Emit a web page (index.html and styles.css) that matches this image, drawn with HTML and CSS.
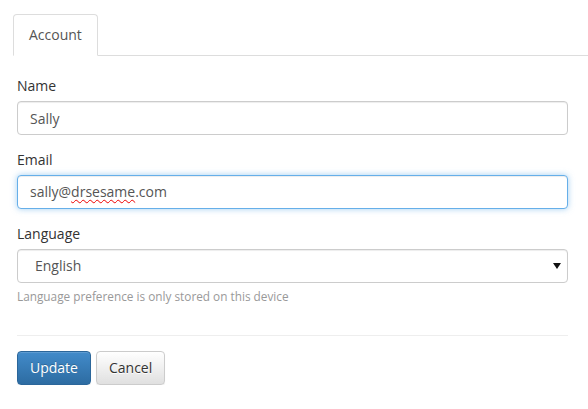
FILE: index.html
```html
<!DOCTYPE html>
<html lang="en">
<head>
<meta charset="utf-8">
<title>Account</title>
<link rel="stylesheet" href="styles.css">
</head>
<body>
<div class="page">
  <ul class="tabs">
    <li class="tab active">Account</li>
    <li class="tab-fill"></li>
  </ul>
  <form class="form">
    <div class="group">
      <label class="label">Name</label>
      <input class="control" type="text" value="Sally">
    </div>
    <div class="group">
      <label class="label">Email</label>
      <div class="control focus">sally@<span class="misspelled">drsesame</span>.com</div>
    </div>
    <div class="group">
      <label class="label">Language</label>
      <div class="select-wrap">
        <div class="control select">English</div>
        <svg class="caret" width="8" height="6" viewBox="0 0 8 6"><path d="M0 0H8L4 6Z" fill="#111"/></svg>
      </div>
      <p class="help">Language preference is only stored on this device</p>
    </div>
    <hr class="rule">
    <div class="actions">
      <button type="button" class="btn btn-primary">Update</button>
      <button type="button" class="btn btn-default">Cancel</button>
    </div>
  </form>
</div>
</body>
</html>
```

FILE: styles.css
```css
* { box-sizing: border-box; }
html, body { margin: 0; padding: 0; background: #fff; }
body {
  font-family: "Open Sans", "Liberation Sans", sans-serif;
  font-size: 14px;
  line-height: 20px;
  color: #333;
}
.page { width: 588px; }
.tabs {
  list-style: none;
  margin: 0;
  padding: 14px 0 0 13px;
  display: flex;
}
.tab {
  height: 42px;
  padding: 10px 15px;
  border: 1px solid #ddd;
  border-bottom-color: #fff;
  border-radius: 4px 4px 0 0;
  color: #555;
  background: #fff;
}
.tab-fill {
  flex: 1;
  border-bottom: 1px solid #ddd;
}
.form {
  padding: 20px 20px 0 17px;
  margin: 0;
}
.group { margin-bottom: 15px; }
.label {
  display: block;
  margin-bottom: 5px;
  color: #333;
}
.control {
  display: block;
  width: 100%;
  height: 34px;
  padding: 6px 12px;
  font-family: inherit;
  font-size: 14px;
  line-height: 20px;
  color: #555;
  background: #fff;
  border: 1px solid #ccc;
  border-radius: 4px;
  box-shadow: inset 0 1px 1px rgba(0,0,0,.075);
  outline: none;
}
.focus {
  border-color: #66afe9;
  box-shadow: inset 0 1px 1px rgba(0,0,0,.075), 0 0 6px rgba(102,175,233,.6);
}
.misspelled {
  text-decoration: underline wavy #e00;
  text-decoration-thickness: 1px;
  text-underline-offset: 2px;
}
.select-wrap { position: relative; }
.select { padding-left: 17px; }
.caret {
  position: absolute;
  right: 7px;
  top: 14px;
}
.help {
  margin: 5px 0 0;
  font-size: 11.8px;
  line-height: 16px;
  color: #999;
}
.rule {
  margin: 31px 0 15px;
  border: 0;
  border-top: 1px solid #eee;
}
.actions { display: flex; gap: 5px; }
.btn {
  height: 34px;
  padding: 6px 12px;
  font-family: inherit;
  font-size: 14px;
  line-height: 20px;
  border-radius: 4px;
  border: 1px solid;
  cursor: pointer;
}
.btn-primary {
  color: #fff;
  background: linear-gradient(#428bca, #2d6ca2);
  border-color: #2b669a;
  text-shadow: 0 -1px 0 rgba(0,0,0,.2);
  box-shadow: inset 0 1px 0 rgba(255,255,255,.15), 0 1px 1px rgba(0,0,0,.075);
}
.btn-default {
  color: #333;
  background: linear-gradient(#fff, #e0e0e0);
  border-color: #ccc;
  text-shadow: 0 1px 0 #fff;
  box-shadow: inset 0 1px 0 rgba(255,255,255,.15), 0 1px 1px rgba(0,0,0,.075);
}
```
